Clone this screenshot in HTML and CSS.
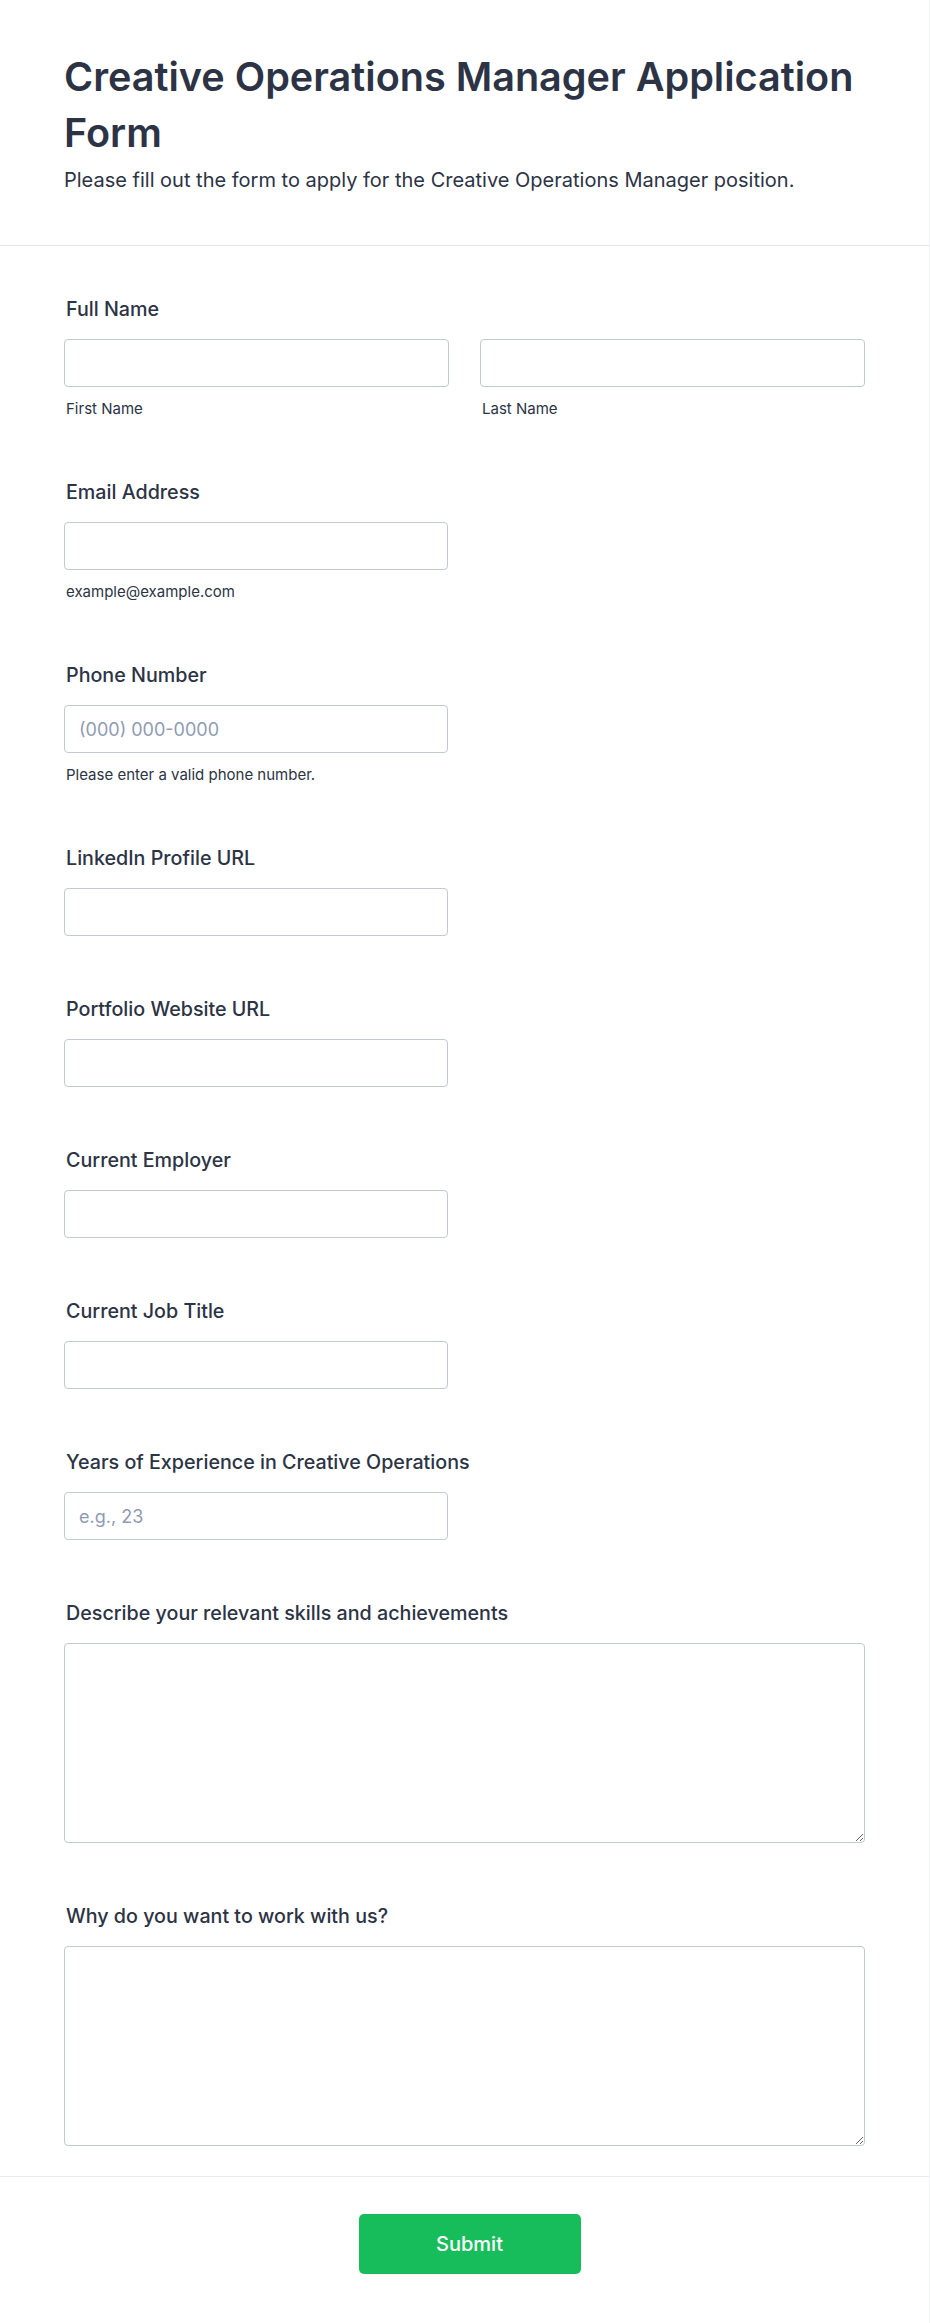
FILE: index.html
```html
<!DOCTYPE html>
<html lang="en">
<head>
<meta charset="utf-8">
<title>Creative Operations Manager Application Form</title>
<link rel="stylesheet" href="styles.css">
</head>
<body>
<div class="page">
  <header class="form-header">
    <h1 class="form-title">Creative Operations Manager Application Form</h1>
    <p class="form-subtitle">Please fill out the form to apply for the Creative Operations Manager position.</p>
  </header>
  <form class="form-body">
    <div class="field">
      <label class="field-label">Full Name</label>
      <div class="name-row">
        <div class="name-col">
          <input class="text-input" type="text">
          <span class="sub-label">First Name</span>
        </div>
        <div class="name-col">
          <input class="text-input" type="text">
          <span class="sub-label">Last Name</span>
        </div>
      </div>
    </div>
    <div class="field">
      <label class="field-label">Email Address</label>
      <input class="text-input half" type="email">
      <span class="sub-label">example@example.com</span>
    </div>
    <div class="field">
      <label class="field-label">Phone Number</label>
      <input class="text-input half" type="tel" placeholder="(000) 000-0000">
      <span class="sub-label">Please enter a valid phone number.</span>
    </div>
    <div class="field">
      <label class="field-label">LinkedIn Profile URL</label>
      <input class="text-input half" type="text">
    </div>
    <div class="field">
      <label class="field-label">Portfolio Website URL</label>
      <input class="text-input half" type="text">
    </div>
    <div class="field">
      <label class="field-label">Current Employer</label>
      <input class="text-input half" type="text">
    </div>
    <div class="field">
      <label class="field-label">Current Job Title</label>
      <input class="text-input half" type="text">
    </div>
    <div class="field">
      <label class="field-label">Years of Experience in Creative Operations</label>
      <input class="text-input half" type="text" placeholder="e.g., 23">
    </div>
    <div class="field">
      <label class="field-label">Describe your relevant skills and achievements</label>
      <textarea class="text-area"></textarea>
    </div>
    <div class="field">
      <label class="field-label">Why do you want to work with us?</label>
      <textarea class="text-area"></textarea>
    </div>
  </form>
  <footer class="form-footer">
    <button class="submit-btn" type="button">Submit</button>
  </footer>
</div>
</body>
</html>
```

FILE: styles.css
```css
* {
  box-sizing: border-box;
}

html, body {
  margin: 0;
  padding: 0;
  background: #ffffff;
}

body {
  font-family: Inter, "Noto Sans", "Liberation Sans", sans-serif;
  color: #2c3345;
}

.page {
  min-height: 2323px;
  border-right: 1px solid #f1f2f6;
}

.form-header {
  padding: 49px 64px 51px 64px;
  border-bottom: 1px solid #e3e5ec;
}

.form-title {
  margin: 0;
  font-size: 39.6px;
  line-height: 56px;
  font-weight: 600;
  color: #2c3345;
}

.form-subtitle {
  margin: 5px 0 0 0;
  font-size: 20px;
  line-height: 28px;
  font-weight: 400;
  color: #2c3345;
}

.form-body {
  padding: 20px 64px 0 64px;
}

.field {
  display: flex;
  flex-direction: column;
  align-items: flex-start;
  padding: 29px 0 30px 0;
}

.field-label {
  display: block;
  font-size: 19.7px;
  line-height: 28px;
  font-weight: 500;
  color: #2c3345;
  padding-left: 2px;
  margin-bottom: 16px;
}

.name-row {
  display: grid;
  grid-template-columns: 1fr 1fr;
  column-gap: 31px;
  width: 801px;
}

.name-col {
  display: flex;
  flex-direction: column;
}

.text-input {
  display: block;
  width: 100%;
  height: 48px;
  border: 1px solid #c3c8d6;
  border-radius: 4px;
  padding: 0 14px;
  font-family: inherit;
  font-size: 18px;
  color: #2c3345;
  background: #ffffff;
  outline: none;
}

.text-input.half {
  width: 384px;
}

.text-input::placeholder {
  color: #8f9bb3;
}

.sub-label {
  display: block;
  margin-top: 12px;
  padding-left: 2px;
  font-size: 15px;
  line-height: 20px;
  color: #2c3345;
}

.text-area {
  display: block;
  width: 801px;
  height: 200px;
  border: 1px solid #c3c8d6;
  border-radius: 4px;
  padding: 12px 14px;
  font-family: inherit;
  font-size: 18px;
  color: #2c3345;
  background: #ffffff;
  outline: none;
  resize: vertical;
}

.form-footer {
  border-top: 1px solid #e9ebf1;
  padding: 37px 0 50px 0;
  display: flex;
  justify-content: center;
}

.submit-btn {
  width: 222px;
  height: 60px;
  margin-left: 10px;
  border: none;
  border-radius: 5px;
  background: #18bd5b;
  color: #ffffff;
  font-family: inherit;
  font-size: 20px;
  font-weight: 500;
  cursor: pointer;
}
```
